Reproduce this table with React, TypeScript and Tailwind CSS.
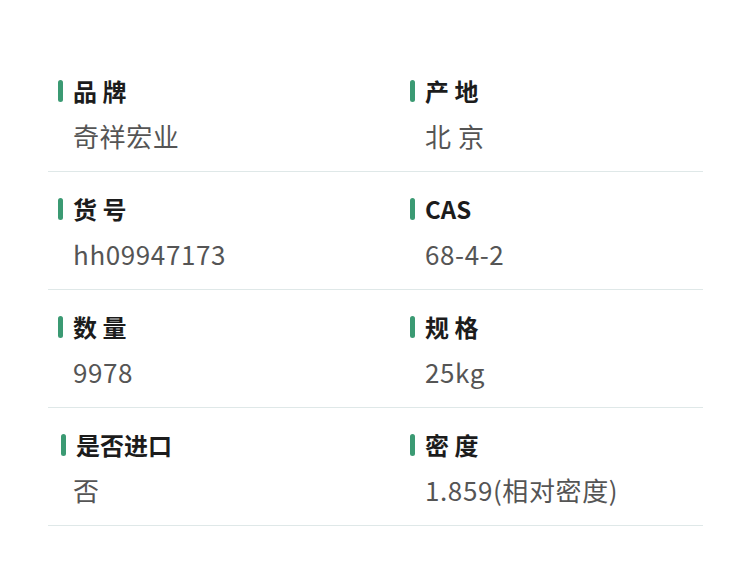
const rows: [string, string, string, string][] = [
  ["品 牌", "奇祥宏业", "产 地", "北 京"],
  ["货 号", "hh09947173", "CAS", "68-4-2"],
  ["数 量", "9978", "规 格", "25kg"],
  ["是否进口", "否", "密 度", "1.859(相对密度)"],
];

function Field({ label, value, nudge }: { label: string; value: string; nudge?: boolean }) {
  return (
    <div className="flex flex-col">
      <div className={`flex items-center ${nudge ? "pl-[3px]" : ""}`}>
        <span className="h-[22px] w-[5px] rounded-full bg-[#3b9a73]" />
        <span className="ml-[10px] text-[24px] font-bold leading-[34px] text-[#1c1c1c]">{label}</span>
      </div>
      <div className="mt-[10px] pl-[15px] text-[26px] leading-[36px] tracking-[0.6px] text-[#555]">{value}</div>
    </div>
  );
}

export default function App() {
  return (
    <div
      className="h-[570px] w-[750px] bg-white pt-[54px]"
      style={{ fontFamily: '"Noto Sans CJK SC", "Noto Sans", sans-serif' }}
    >
      <div className="mx-[48px] w-[655px]">
        {rows.map((r, i) => (
          <div
            key={i}
            className="grid h-[118px] grid-cols-[352px_1fr] border-b border-[#dfe8e8] pl-[10px] pt-[20px]"
          >
            <Field label={r[0]} value={r[1]} nudge={r[0] === "是否进口"} />
            <Field label={r[2]} value={r[3]} />
          </div>
        ))}
      </div>
    </div>
  );
}
